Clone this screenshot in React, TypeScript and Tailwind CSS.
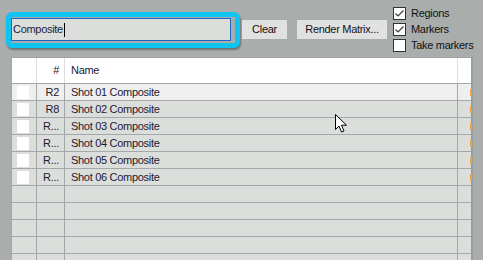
import React from 'react';

const ROWS = [
  { id: 'R2', name: 'Shot 01 Composite' },
  { id: 'R8', name: 'Shot 02 Composite' },
  { id: 'R...', name: 'Shot 03 Composite' },
  { id: 'R...', name: 'Shot 04 Composite' },
  { id: 'R...', name: 'Shot 05 Composite' },
  { id: 'R...', name: 'Shot 06 Composite' },
];

const EMPTY_ROWS = 5;

function CheckBox({ checked, label }: { checked: boolean; label: string }) {
  return (
    <div className="flex items-center gap-[5px] h-[13px]">
      <span className="w-[13px] h-[13px] shrink-0 bg-white border border-[#333333] flex items-center justify-center">
        {checked && (
          <svg width="11" height="11" viewBox="0 0 11 11">
            <polyline points="1.5,5.5 4,8 9.5,2.5" fill="none" stroke="#3a3a3a" strokeWidth="1.2" />
          </svg>
        )}
      </span>
      <span className="whitespace-nowrap text-[#111111]">{label}</span>
    </div>
  );
}

function Cursor() {
  return (
    <svg className="absolute left-[335px] top-[114px]" width="13" height="20" viewBox="0 0 13 20">
      <path
        d="M0.5 0.5 L0.5 15.5 L4 12 L6.5 18 L9 17 L6.5 11.2 L11.5 11.2 Z"
        fill="#ffffff"
        stroke="#000000"
        strokeWidth="1"
        strokeLinejoin="miter"
      />
    </svg>
  );
}

export default function App() {
  return (
    <div
      className="relative w-[483px] h-[260px] overflow-hidden bg-[#a9adac] text-[11px] tracking-[-0.3px]"
      style={{ fontFamily: '"Liberation Sans", Arial, sans-serif' }}
    >
      {/* Toolbar */}
      <div className="flex items-start h-[57px]">
        <div className="ml-[6px] mt-[12px] w-[234px] h-[36px] border-[5px] border-[#10c4f2] rounded-[6px] shadow-[1px_2px_2px_rgba(0,0,0,0.35)] bg-[#a9adac]">
          <div className="mt-[1px] w-[220px] h-[23px] border border-[#1c64c8] bg-[#dcdedc] flex items-center pl-[1px] text-[#1a1a38]">
            <span>Composite</span>
            <span className="w-px h-[14px] bg-black ml-[1px]" />
          </div>
        </div>
        <button className="ml-[2px] mt-[20px] w-[45px] h-[19px] bg-[#e1e1e1] text-[#111111] flex items-center justify-center">
          Clear
        </button>
        <button className="ml-[10px] mt-[20px] w-[90px] h-[19px] bg-[#e1e1e1] text-[#111111] flex items-center justify-center whitespace-nowrap">
          Render Matrix...
        </button>
        <div className="ml-[6px] mt-[7px] flex flex-col gap-[3px]">
          <CheckBox checked label="Regions" />
          <CheckBox checked label="Markers" />
          <CheckBox checked={false} label="Take markers" />
        </div>
      </div>

      {/* List */}
      <div className="ml-[11px] w-[462px] border-l border-t border-[#a0a6a6] border-r-2 border-r-[#979d9d] text-[#1e2030]">
        <div className="grid grid-cols-[25px_28px_393px_14px] h-[26px] bg-white border-b border-[#a3a9a9]">
          <div className="border-r border-[#dedede]" />
          <div className="border-r border-[#dedede] flex items-center justify-end pr-[5px]">#</div>
          <div className="border-r border-[#dedede] flex items-center pl-[6px]">Name</div>
          <div />
        </div>
        {ROWS.map((r, i) => (
          <div
            key={i}
            className={`grid grid-cols-[25px_28px_393px_14px] h-[17px] border-b border-[#a3a9a9] ${i === 0 ? 'bg-[#efefef]' : 'bg-[#dcdedc]'}`}
          >
            <div className="border-r border-[#a3a9a9] flex items-center pl-[5px]">
              <span className="w-[12px] h-[13px] bg-white" />
            </div>
            <div className="border-r border-[#a3a9a9] flex items-center justify-end pr-[5px]">{r.id}</div>
            <div className="border-r border-[#a3a9a9] flex items-center pl-[6px] whitespace-nowrap">{r.name}</div>
            <div className="flex items-center justify-end">
              <span className="w-[2px] h-[7px] bg-[#f0a040]" />
            </div>
          </div>
        ))}
        {Array.from({ length: EMPTY_ROWS }).map((_, i) => (
          <div key={'e' + i} className="grid grid-cols-[25px_28px_393px_14px] h-[17px] border-b border-[#a3a9a9] bg-[#dcdedc]">
            <div className="border-r border-[#a3a9a9]" />
            <div className="border-r border-[#a3a9a9]" />
            <div className="border-r border-[#a3a9a9]" />
            <div />
          </div>
        ))}
      </div>

      <Cursor />
    </div>
  );
}
